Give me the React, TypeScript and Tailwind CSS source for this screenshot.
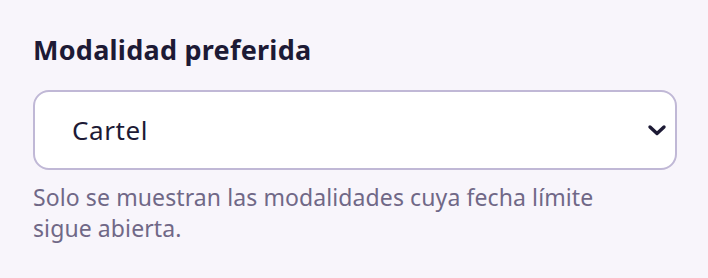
import React from "react";

export default function App() {
  return (
    <div className="w-[708px] h-[278px] bg-[#f8f5fb] px-[33px] pt-[32px]" style={{ fontFamily: '"Noto Sans", "Open Sans", sans-serif' }}>
      <label className="block text-[27px] leading-[36px] font-bold text-[#1d1a35] tracking-[0.25px]">Modalidad preferida</label>
      <div className="relative mt-[22px] h-[80px] w-[644px] rounded-[16px] border-2 border-[#c0b8d6] bg-white flex items-center pl-[37px]">
        <span className="text-[26px] tracking-[0.6px] text-[#1d1a35]">Cartel</span>
        <svg className="absolute right-[8px] top-1/2 -translate-y-1/2" width="20" height="14" viewBox="0 0 20 14" fill="none">
          <path d="M3 4l7 6.5 7-6.5" stroke="#1d1a35" strokeWidth="3.4" strokeLinecap="round" strokeLinejoin="round" />
        </svg>
      </div>
      <p className="mt-[12px] w-[600px] text-[23px] leading-[31px] tracking-[0.1px] text-[#706887]">Solo se muestran las modalidades cuya fecha límite sigue abierta.</p>
    </div>
  );
}
